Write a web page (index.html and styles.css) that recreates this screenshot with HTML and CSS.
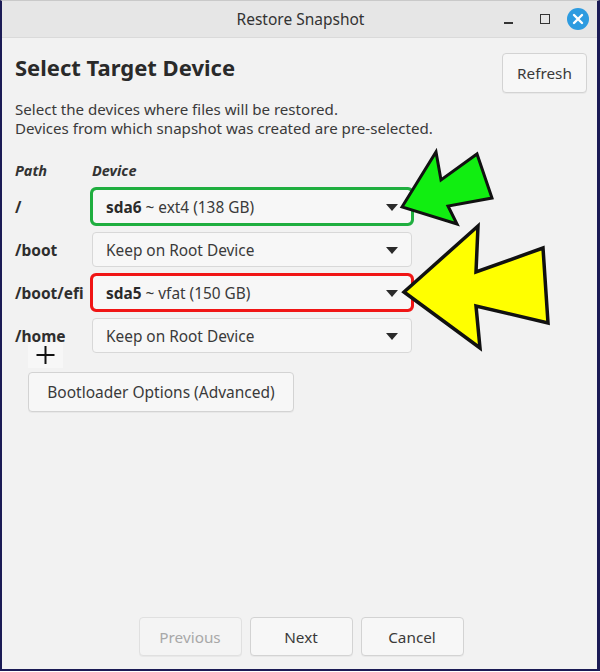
FILE: index.html
```html
<!DOCTYPE html>
<html>
<head>
<meta charset="utf-8">
<title>Restore Snapshot</title>
<link rel="stylesheet" href="styles.css">
</head>
<body>
<div class="window">
  <div class="titlebar">
    <div class="title">Restore Snapshot</div>
    <div class="controls">
      <span class="ctl min"></span>
      <span class="ctl max"></span>
      <span class="ctl close">
        <svg width="22" height="22" viewBox="0 0 22 22"><circle cx="11" cy="11" r="11" fill="#2d9be0"/><path d="M7 7 L15 15 M15 7 L7 15" stroke="#fff" stroke-width="2.4" stroke-linecap="round"/></svg>
      </span>
    </div>
  </div>
  <div class="main">
    <div class="header">
      <h1 class="heading">Select Target Device</h1>
      <button class="btn refresh">Refresh</button>
    </div>
    <p class="desc">Select the devices where files will be restored.<br>Devices from which snapshot was created are pre-selected.</p>
    <div class="grid">
      <div class="colhead">Path</div>
      <div class="colhead">Device</div>

      <div class="path">/</div>
      <div class="combo hl-green"><span><b>sda6</b> ~ ext4 (138 GB)</span><i class="tri"></i></div>

      <div class="path">/boot</div>
      <div class="combo"><span>Keep on Root Device</span><i class="tri"></i></div>

      <div class="path">/boot/efi</div>
      <div class="combo hl-red"><span><b>sda5</b> ~ vfat (150 GB)</span><i class="tri"></i></div>

      <div class="path">/home</div>
      <div class="combo"><span>Keep on Root Device</span><i class="tri"></i></div>
    </div>
    <button class="btn boot">Bootloader Options (Advanced)</button>
    <div class="footer">
      <button class="btn nav disabled">Previous</button>
      <button class="btn nav">Next</button>
      <button class="btn nav">Cancel</button>
    </div>
  </div>
  <div class="cursor">
    <svg width="35" height="26" viewBox="0 0 35 26"><path d="M17.5 4 V22 M8.5 13 H26.5" stroke="#111" stroke-width="2"/></svg>
  </div>
  <svg class="arrows" width="600" height="672" viewBox="0 0 600 672">
    <polygon points="402,207 436,152 441,180 477,154 492,198 448,206 457,224" fill="#11ee11" stroke="#111" stroke-width="3" stroke-linejoin="miter"/>
    <polygon points="404,292 478,226 476,272 543,248 548,323 476,306 480,348" fill="#ffff00" stroke="#111" stroke-width="3.5" stroke-linejoin="miter"/>
  </svg>
</div>
</body>
</html>
```

FILE: styles.css
```css
* { box-sizing: border-box; }
html, body { margin: 0; padding: 0; background: #ffffff; }
body {
  font-family: "Noto Sans", "Open Sans", sans-serif;
  color: #3a3a3a;
}
.window {
  position: relative;
  width: 600px;
  height: 671px;
  background: #f2f2f2;
  border-left: 2px solid #1b1b55;
  border-right: 3px solid #1b1b55;
  border-bottom: 2px solid #1b1b55;
  border-top: 1px solid #c9c9c9;
  display: flex;
  flex-direction: column;
  overflow: hidden;
}
.titlebar {
  position: relative;
  height: 37px;
  background: #e6e6e6;
  border-bottom: 1px solid #dadada;
  display: flex;
  align-items: center;
  justify-content: center;
  flex-shrink: 0;
}
.title {
  font-size: 15.5px;
  color: #333;
  margin-left: 2px;
}
.controls {
  position: absolute;
  right: 8px;
  top: 7px;
  display: flex;
  align-items: center;
}
.ctl { display: block; }
.ctl.min {
  width: 9px; height: 2px; background: #333;
  margin-top: 8px; margin-right: 27px;
}
.ctl.max {
  width: 10px; height: 10px; border: 1.5px solid #333;
  margin-right: 17px;
}
.ctl.close svg { display: block; }
.main {
  flex: 1;
  display: flex;
  flex-direction: column;
  padding: 15px 10px 13px 13px;
}
.header {
  display: flex;
  justify-content: space-between;
  align-items: flex-start;
}
.heading {
  margin: 0;
  font-size: 22px;
  line-height: 28px;
  font-weight: bold;
  color: #2a2a2a;
}
.btn {
  font-family: inherit;
  font-size: 15.3px;
  color: #3a3a3a;
  background: #f7f7f7;
  border: 1px solid #d3d3d3;
  border-radius: 4px;
  padding: 0;
  box-shadow: 0 1px 0 rgba(0,0,0,0.04);
}
.refresh {
  width: 85px;
  height: 40px;
}
.desc {
  margin: 7px 0 0 0;
  font-size: 15.1px;
  line-height: 19px;
  color: #3a3a3a;
}
.grid {
  display: grid;
  grid-template-columns: 77px 320px;
  row-gap: 8px;
  margin-top: 23px;
}
.colhead {
  font-size: 14.5px;
  line-height: 19px;
  font-weight: bold;
  font-style: italic;
  color: #333;
  margin-bottom: 1px;
}
.path {
  font-size: 15.5px;
  font-weight: bold;
  color: #2e2e2e;
  display: flex;
  align-items: center;
  height: 35px;
}
.combo {
  height: 35px;
  background: #f7f7f7;
  border: 1px solid #d8d8d8;
  border-radius: 4px;
  display: flex;
  align-items: center;
  justify-content: space-between;
  padding: 1px 13px 0 13px;
  font-size: 15.4px;
  color: #3a3a3a;
}
.combo b { color: #2a2a2a; }
.tri {
  width: 0; height: 0;
  border-left: 6.5px solid transparent;
  border-right: 6.5px solid transparent;
  border-top: 7px solid #2a2a2a;
}
.hl-green { outline: 3px solid #1fae3f; outline-offset: -1px; border-color: #1fae3f; }
.hl-red { outline: 3px solid #f01515; outline-offset: -1px; border-color: #f01515; }
.boot {
  margin-top: 19px;
  margin-left: 13px;
  width: 266px;
  height: 40px;
  font-size: 15.5px;
}
.footer {
  margin-top: auto;
  display: flex;
  justify-content: center;
  gap: 8px;
}
.nav {
  width: 103px;
  height: 39px;
}
.nav.disabled {
  color: #a8a8a8;
  border-color: #e0e0e0;
  background: #f4f4f4;
}
.cursor {
  position: absolute;
  left: 26px;
  top: 341px;
  width: 35px;
  height: 26px;
  background: #f7f7f7;
}
.cursor svg { display: block; }
.arrows {
  position: absolute;
  left: -2px;
  top: -1px;
  pointer-events: none;
}
```
